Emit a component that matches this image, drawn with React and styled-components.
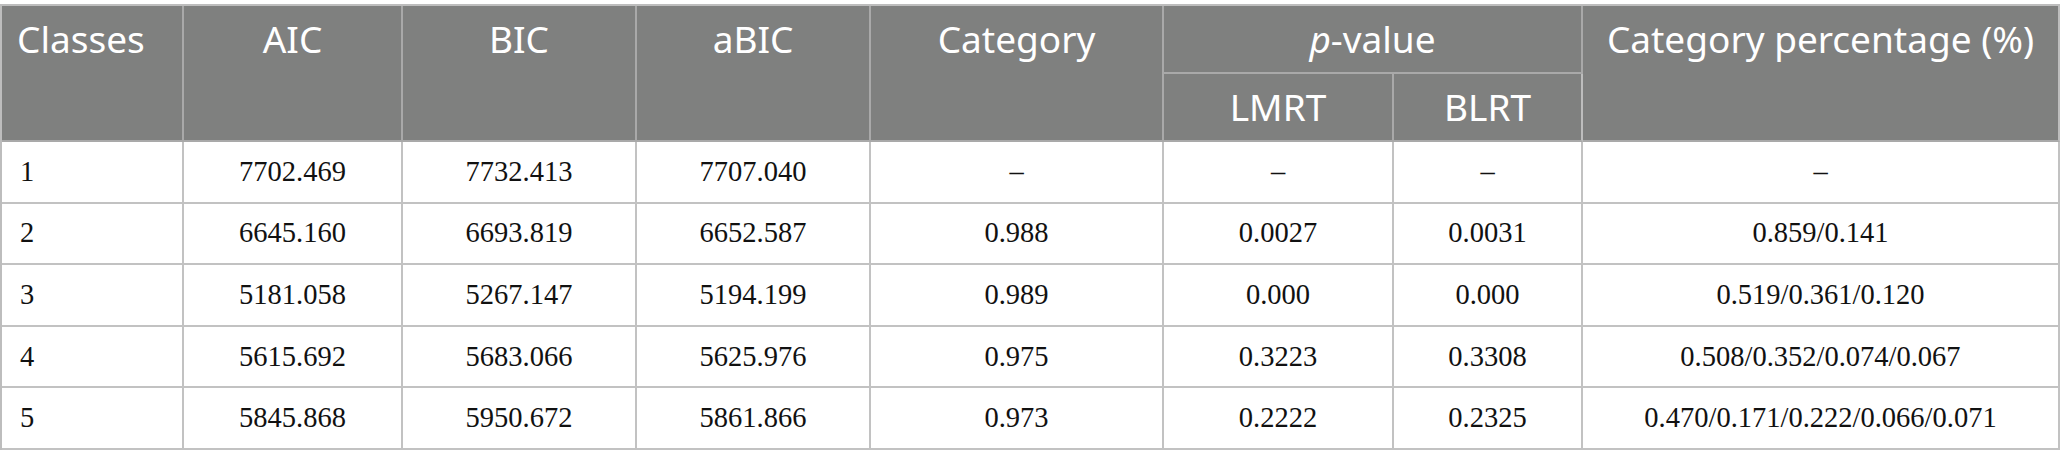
import React from "react";
import styled, { createGlobalStyle } from "styled-components";

const Global = createGlobalStyle`
  html, body { margin: 0; padding: 0; background: #ffffff; }
  body { width: 2060px; }
`;

const Page = styled.div`
  padding-top: 4px;
`;

const Table = styled.table`
  width: 2060px;
  table-layout: fixed;
  border-collapse: separate;
  border-spacing: 0;
  border-top: 2px solid #bdbdbd;
  border-left: 2px solid #bdbdbd;
`;

const HeadCell = styled.th`
  background: #7f807f;
  color: #ffffff;
  font-family: "Noto Sans", "Open Sans", sans-serif;
  font-weight: 400;
  font-size: 37px;
  height: 66px;
  line-height: 66px;
  padding: 0;
  padding-left: ${(p) => (p.$left ? "15px" : "0")};
  text-align: ${(p) => (p.$left ? "left" : "center")};
  vertical-align: top;
  border-right: 2px solid #a9a9a9;
  border-bottom: 2px solid #a9a9a9;
  white-space: nowrap;
  &:last-child { border-right-color: #bdbdbd; }
`;

const Cell = styled.td`
  font-family: "Liberation Serif", "Times New Roman", serif;
  font-size: 28.5px;
  color: #111111;
  height: 59.6px;
  padding: 0 0 0 ${(p) => (p.$left ? "18px" : "0")};
  text-align: ${(p) => (p.$left ? "left" : "center")};
  vertical-align: middle;
  border-right: 2px solid #c2c2c2;
  border-bottom: 2px solid #c2c2c2;
  white-space: nowrap;
`;

const widths = [184, 219, 234, 234, 293, 230, 189, 477];

const rows = [
  ["1", "7702.469", "7732.413", "7707.040", "–", "–", "–", "–"],
  ["2", "6645.160", "6693.819", "6652.587", "0.988", "0.0027", "0.0031", "0.859/0.141"],
  ["3", "5181.058", "5267.147", "5194.199", "0.989", "0.000", "0.000", "0.519/0.361/0.120"],
  ["4", "5615.692", "5683.066", "5625.976", "0.975", "0.3223", "0.3308", "0.508/0.352/0.074/0.067"],
  ["5", "5845.868", "5950.672", "5861.866", "0.973", "0.2222", "0.2325", "0.470/0.171/0.222/0.066/0.071"],
];

export default function App() {
  return (
    <Page>
      <Global />
      <Table>
        <colgroup>
          {widths.map((w, i) => (
            <col key={i} style={{ width: i === 0 ? w - 2 : w }} />
          ))}
        </colgroup>
        <thead>
          <tr>
            <HeadCell rowSpan={2} $left>Classes</HeadCell>
            <HeadCell rowSpan={2}>AIC</HeadCell>
            <HeadCell rowSpan={2}>BIC</HeadCell>
            <HeadCell rowSpan={2}>aBIC</HeadCell>
            <HeadCell rowSpan={2}>Category</HeadCell>
            <HeadCell colSpan={2}><i>p</i>-value</HeadCell>
            <HeadCell rowSpan={2}>Category percentage (%)</HeadCell>
          </tr>
          <tr>
            <HeadCell>LMRT</HeadCell>
            <HeadCell>BLRT</HeadCell>
          </tr>
        </thead>
        <tbody>
          {rows.map((r, i) => (
            <tr key={i}>
              {r.map((c, j) => (
                <Cell key={j} $left={j === 0}>{c}</Cell>
              ))}
            </tr>
          ))}
        </tbody>
      </Table>
    </Page>
  );
}
